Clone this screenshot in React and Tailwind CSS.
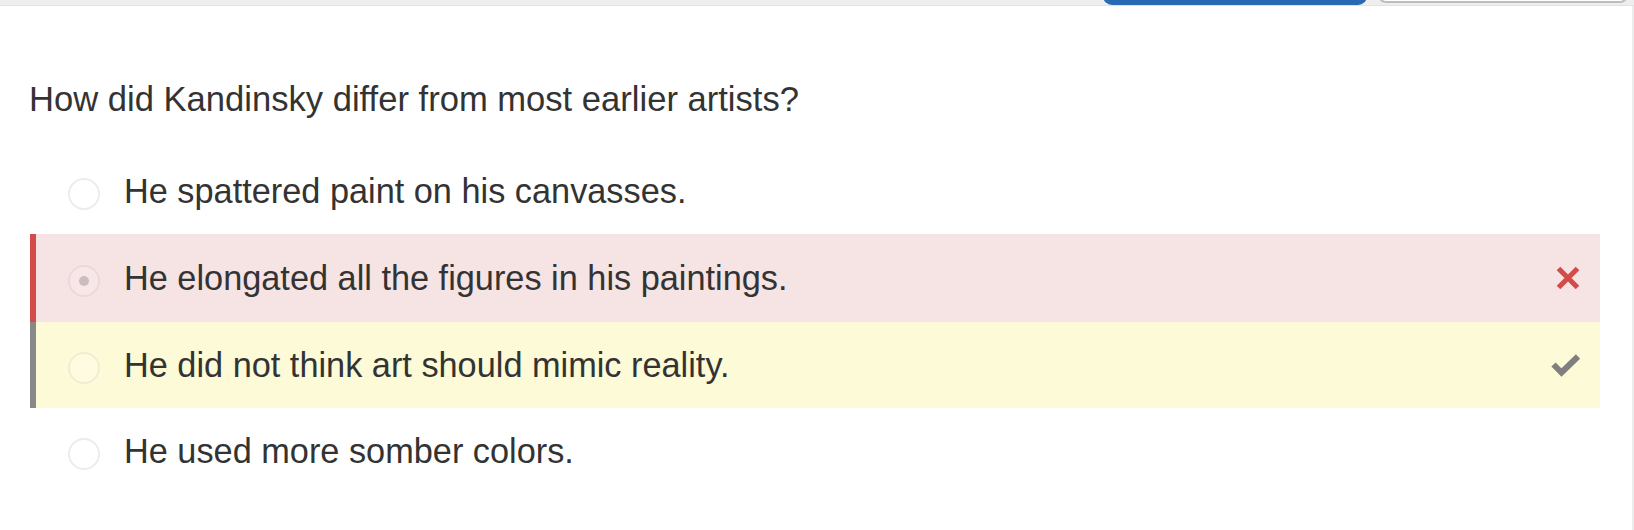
import React from "react";

function Radio({ tone, selected }) {
  const ring =
    tone === "red"
      ? "border-[#ecd8da] bg-[#f7e7e8]"
      : tone === "yellow"
      ? "border-[#f1edd2] bg-[#fefbe0]"
      : "border-[#ececec] bg-white";
  return (
    <div
      className={`mt-[6px] flex h-[32px] w-[32px] shrink-0 items-center justify-center rounded-full border-2 ${ring}`}
    >
      {selected && <div className="h-[10px] w-[10px] rounded-full bg-[#cbbcc0]" />}
    </div>
  );
}

function XIcon() {
  return (
    <svg width="26" height="24" viewBox="0 0 26 24" className="block">
      <path d="M3.5 2.5 L22.5 21.5 M22.5 2.5 L3.5 21.5" stroke="#d24b48" strokeWidth="5" strokeLinecap="butt" />
    </svg>
  );
}

function CheckIcon() {
  return (
    <svg width="30" height="24" viewBox="0 0 30 24" className="block">
      <path d="M2.5 11.5 L10.5 19.5 L27 3.5" stroke="#7f7f7f" strokeWidth="6" fill="none" strokeLinejoin="miter" />
    </svg>
  );
}

function Option({ text, variant, height }) {
  const base =
    variant === "wrong"
      ? "bg-[#f6e3e4] border-[#d24d4a]"
      : variant === "correct"
      ? "bg-[#fdfad7] border-[#888888]"
      : "bg-white border-transparent";
  return (
    <div className={`flex items-center border-l-[6px] pl-[32px] pr-[19px] ${base} ${height}`}>
      <Radio
        tone={variant === "wrong" ? "red" : variant === "correct" ? "yellow" : "none"}
        selected={variant === "wrong"}
      />
      <div className="ml-[24px] flex-1 text-[34.3px] leading-[40px] text-[#333333]">{text}</div>
      {variant === "wrong" && <XIcon />}
      {variant === "correct" && <CheckIcon />}
    </div>
  );
}

export default function App() {
  return (
    <div
      className="relative flex h-[530px] w-[1634px] flex-col overflow-hidden bg-white"
      style={{ fontFamily: '"Liberation Sans", Arial, sans-serif' }}
    >
      <div className="flex h-[6px] shrink-0 items-end border-b border-[#e2e2e2] bg-[#eeeeee] pr-[6px]">
        <div className="flex-1" />
        <div className="h-[40px] w-[264px] rounded-b-[9px] bg-[#2a6ab5]" />
        <div className="ml-[11px] mb-[2px] h-[40px] w-[250px] rounded-b-[8px] border-2 border-[#bdbdbd] bg-white" />
      </div>
      <div className="flex flex-1 border-r-2 border-[#ececec]">
        <div className="flex flex-1 flex-col">
          <div className="mt-[73px] pl-[29px] text-[34.6px] leading-[40px] text-[#333333]">
            How did Kandinsky differ from most earlier artists?
          </div>
          <div className="mt-[29px] ml-[30px] w-[1570px]">
            <Option text="He spattered paint on his canvasses." variant="none" height="h-[86px]" />
            <Option text="He elongated all the figures in his paintings." variant="wrong" height="h-[88px]" />
            <Option text="He did not think art should mimic reality." variant="correct" height="h-[86px]" />
            <Option text="He used more somber colors." variant="none" height="h-[86px]" />
          </div>
        </div>
      </div>
    </div>
  );
}
